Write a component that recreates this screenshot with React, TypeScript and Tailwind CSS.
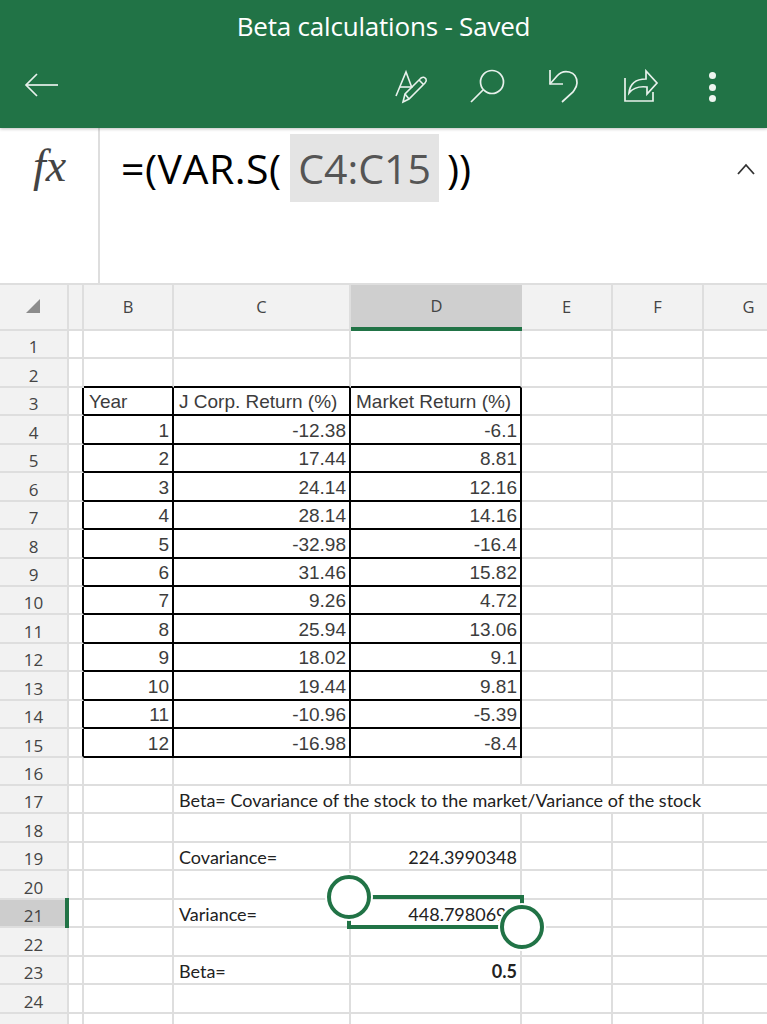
import React from 'react';

const GRID = 'border-[#dedede]';

// largura das colunas: cabeçalho de linha, A, B, C, D, E, F, G
const colunas = ['w-[69px]', 'w-[15px]', 'w-[90px]', 'w-[177px]', 'w-[171px]', 'w-[91px]', 'w-[91px]', 'w-[91px]'];

const dados: [string, string, string][] = [
  ['1', '-12.38', '-6.1'],
  ['2', '17.44', '8.81'],
  ['3', '24.14', '12.16'],
  ['4', '28.14', '14.16'],
  ['5', '-32.98', '-16.4'],
  ['6', '31.46', '15.82'],
  ['7', '9.26', '4.72'],
  ['8', '25.94', '13.06'],
  ['9', '18.02', '9.1'],
  ['10', '19.44', '9.81'],
  ['11', '-10.96', '-5.39'],
  ['12', '-16.98', '-8.4'],
];

function Celula({
  largura,
  preta = false,
  fundoPreto = false,
  semDireita = false,
  children,
  className = '',
}: {
  largura: string;
  preta?: boolean;
  fundoPreto?: boolean;
  semDireita?: boolean;
  children?: React.ReactNode;
  className?: string;
}) {
  return (
    <div
      className={`${largura} shrink-0 box-border border-b-2 flex items-end whitespace-nowrap ${
        semDireita ? 'pr-[2px]' : 'border-r-2'
      } ${preta ? 'border-r-black' : 'border-r-[#dedede]'} ${fundoPreto ? 'border-b-black' : 'border-b-[#dedede]'} ${className}`}
    >
      {children}
    </div>
  );
}

function Linha({ n, ativa = false, children }: { n: number; ativa?: boolean; children?: React.ReactNode }) {
  return (
    <div className="flex h-[28.45px] w-[886px]">
      <div
        className={`w-[69px] shrink-0 box-border relative border-r-2 border-b-2 ${GRID} flex items-end justify-center text-[17px] leading-[24px] text-[#444] ${
          ativa ? 'bg-[#cdcdcd]' : 'bg-[#f2f2f2]'
        }`}
      >
        <span className="translate-y-[2px]">{n}</span>
        {ativa && <span className="absolute right-[-2px] top-[-2px] bottom-[-2px] w-[4px] bg-[#217346]" />}
      </div>
      {children}
    </div>
  );
}

const tabela = "font-['Liberation_Sans',Arial,sans-serif] text-[19px] text-[#3c3c3c] leading-[24px] ";
const folha = "font-['Lato',sans-serif] text-[18px] text-[#222] leading-[24px] ";

function LinhaVazia({ n, topoPreto = false, ativa }: { n: number; topoPreto?: boolean; ativa?: boolean }) {
  return (
    <Linha n={n} ativa={ativa}>
      {colunas.slice(1).map((c, i) => (
        <Celula key={c + i} largura={c} fundoPreto={topoPreto && i >= 1 && i <= 3} />
      ))}
    </Linha>
  );
}

function LinhaResumo({
  n,
  rotulo,
  valor,
  negrito,
  ativa,
}: {
  n: number;
  rotulo: string;
  valor: string;
  negrito?: boolean;
  ativa?: boolean;
}) {
  return (
    <Linha n={n} ativa={ativa}>
      <Celula largura={colunas[1]} />
      <Celula largura={colunas[2]} />
      <Celula largura={colunas[3]} className={`${folha} pl-[5px]`}>
        {rotulo}
      </Celula>
      <Celula largura={colunas[4]} className={`${folha} justify-end pr-[3px] ${negrito ? 'font-bold' : ''}`}>
        {valor}
      </Celula>
      <Celula largura={colunas[5]} />
      <Celula largura={colunas[6]} />
      <Celula largura={colunas[7]} />
    </Linha>
  );
}

function IconeEditar() {
  return (
    <svg width="36" height="36" viewBox="0 0 36 36" fill="none" stroke="#e8f1ec" strokeWidth="1.6">
      <path d="M2 27 L12 3 L18 19" />
      <path d="M6 18 H17" />
      <path d="M9 33 L11 25 L27 9 Q30 7 32 10 Q33 12 31 14 L15 30 Z" />
      <path d="M11 25 L15 30" />
      <path d="M25 11 L29.5 15.5" />
    </svg>
  );
}

function IconeBusca() {
  return (
    <svg width="38" height="36" viewBox="0 0 38 36" fill="none" stroke="#e8f1ec" strokeWidth="1.7">
      <circle cx="22" cy="13" r="11.5" />
      <path d="M1 33 L13 21" />
    </svg>
  );
}

function IconeDesfazer() {
  return (
    <svg width="32" height="36" viewBox="0 0 32 36" fill="none" stroke="#e8f1ec" strokeWidth="1.7">
      <path d="M2 1 V15 H15" />
      <path d="M2 15 L9 7 C15 0 29 1 29 14 C29 18 27 20 25 23 L14 33" />
    </svg>
  );
}

function IconeCompartilhar() {
  return (
    <svg width="36" height="36" viewBox="0 0 36 36" fill="none" stroke="#e8f1ec" strokeWidth="1.7">
      <path d="M2 9 V32 H30 V23" />
      <path d="M6 24 C7 14 14 10 23 10 V2 L34 14 L24 25 V18 C16 17 10 19 6 24 Z" />
    </svg>
  );
}

export default function App() {
  return (
    <div className="relative w-[767px] h-[1024px] overflow-hidden bg-white font-['Open_Sans',sans-serif]">
      {/* barra verde */}
      <header className="h-[128px] bg-[#217346] text-white shadow-[0_1px_3px_rgba(0,0,0,0.25)] relative z-10">
        <div className="h-[53px] flex items-center justify-center text-[26px] tracking-[-0.2px]">Beta calculations - Saved</div>
        <div className="flex items-start pt-[16px]">
          <svg width="36" height="26" viewBox="0 0 36 26" fill="none" stroke="#e8f1ec" strokeWidth="1.7" className="ml-[24px] mt-[3px]">
            <path d="M13 2 L2 13 L13 24" />
            <path d="M2 13 H34" />
          </svg>
          <div className="ml-[334px] flex"><IconeEditar /></div>
          <div className="ml-[40px] flex"><IconeBusca /></div>
          <div className="ml-[40px] flex"><IconeDesfazer /></div>
          <div className="ml-[43px] flex"><IconeCompartilhar /></div>
          <div className="ml-[50px] mt-[3px] flex flex-col gap-[4.5px]">
            <span className="w-[7px] h-[7px] rounded-full bg-[#eef5f0]" />
            <span className="w-[7px] h-[7px] rounded-full bg-[#eef5f0]" />
            <span className="w-[7px] h-[7px] rounded-full bg-[#eef5f0]" />
          </div>
        </div>
      </header>

      {/* barra de fórmula */}
      <div className="h-[157px] box-border flex border-b-[2px] border-[#dedede]">
        <div className="w-[100px] box-border border-r-2 border-[#dedede] pl-[33px] pt-[14px] font-['Liberation_Serif',serif] italic text-[46px] leading-[48px] text-[#444]">
          fx
        </div>
        <div className="w-[636px] flex items-start pt-[6px] pl-[21px] text-[41px] leading-[68px] text-black">
          <span className="w-[169px] tracking-[0.5px] whitespace-nowrap">=(VAR.S(</span>
          <span className="w-[149px] h-[68px] bg-[#e4e4e4] text-[#555] text-center">C4:C15</span>
          <span className="ml-[8px]">))</span>
        </div>
        <svg width="20" height="12" viewBox="0 0 20 12" fill="none" stroke="#333" strokeWidth="1.8" className="mt-[35px] shrink-0">
          <path d="M2 11 L10 2 L18 11" />
        </svg>
      </div>

      {/* cabeçalho das colunas */}
      <div className="flex h-[46px] w-[886px] text-[16.5px] text-[#444]">
        <div className={`${colunas[0]} shrink-0 box-border border-r-2 border-b-2 ${GRID} bg-[#f2f2f2] flex items-center justify-center pr-[2px] pb-[2px]`}>
          <svg width="14" height="14" viewBox="0 0 14 14">
            <path d="M14 0 V14 H0 Z" fill="#8c8c8c" />
          </svg>
        </div>
        {['', 'B', 'C', 'D', 'E', 'F', 'G'].map((l, i) =>
          l === 'D' ? (
            <div key={l} className={`${colunas[i + 1]} shrink-0 box-border border-b-[4px] border-[#217346] bg-[#cfcfcf] flex items-center justify-center`}>
              {l}
            </div>
          ) : (
            <div key={l} className={`${colunas[i + 1]} shrink-0 box-border border-r-2 border-b-2 ${GRID} bg-[#f2f2f2] flex items-center justify-center`}>
              {l}
            </div>
          ),
        )}
      </div>

      <LinhaVazia n={1} />
      <LinhaVazia n={2} topoPreto />

      <Linha n={3}>
        <Celula largura={colunas[1]} preta />
        <Celula largura={colunas[2]} preta fundoPreto className={`${tabela} pl-[5px]`}>Year</Celula>
        <Celula largura={colunas[3]} preta fundoPreto className={`${tabela} pl-[5px]`}>J Corp. Return (%)</Celula>
        <Celula largura={colunas[4]} preta fundoPreto className={`${tabela} pl-[5px]`}>Market Return (%)</Celula>
        <Celula largura={colunas[5]} />
        <Celula largura={colunas[6]} />
        <Celula largura={colunas[7]} />
      </Linha>

      {dados.map(([ano, j, m], i) => (
        <Linha key={ano} n={i + 4}>
          <Celula largura={colunas[1]} preta />
          <Celula largura={colunas[2]} preta fundoPreto className={`${tabela} justify-end pr-[3px]`}>{ano}</Celula>
          <Celula largura={colunas[3]} preta fundoPreto className={`${tabela} justify-end pr-[3px]`}>{j}</Celula>
          <Celula largura={colunas[4]} preta fundoPreto className={`${tabela} justify-end pr-[3px]`}>{m}</Celula>
          <Celula largura={colunas[5]} />
          <Celula largura={colunas[6]} />
          <Celula largura={colunas[7]} />
        </Linha>
      ))}

      <LinhaVazia n={16} />

      <Linha n={17}>
        <Celula largura={colunas[1]} />
        <Celula largura={colunas[2]} />
        <Celula largura={colunas[3]} semDireita className={`${folha} pl-[5px]`}>
          Beta= Covariance of the stock to the market/Variance of the stock
        </Celula>
        <Celula largura={colunas[4]} semDireita />
        <Celula largura={colunas[5]} semDireita />
        <Celula largura={colunas[6]} semDireita />
        <Celula largura={colunas[7]} />
      </Linha>

      <LinhaVazia n={18} />
      <LinhaResumo n={19} rotulo="Covariance=" valor="224.3990348" />
      <LinhaVazia n={20} />
      <LinhaResumo n={21} rotulo="Variance=" valor="448.7980696" ativa />
      <LinhaVazia n={22} />
      <LinhaResumo n={23} rotulo="Beta=" valor="0.5" negrito />
      <LinhaVazia n={24} />
      <LinhaVazia n={25} />

      {/* seleção da célula D21 */}
      <div className="absolute left-[347px] top-[895px] w-[177px] h-[34px] border-[4px] border-[#217346]" />
      <div className="absolute left-[327px] top-[875px] w-[44px] h-[44px] rounded-full bg-white border-[4px] border-[#217346] ring-2 ring-white" />
      <div className="absolute left-[500px] top-[905px] w-[44px] h-[44px] rounded-full bg-white border-[4px] border-[#217346] ring-2 ring-white" />
    </div>
  );
}
